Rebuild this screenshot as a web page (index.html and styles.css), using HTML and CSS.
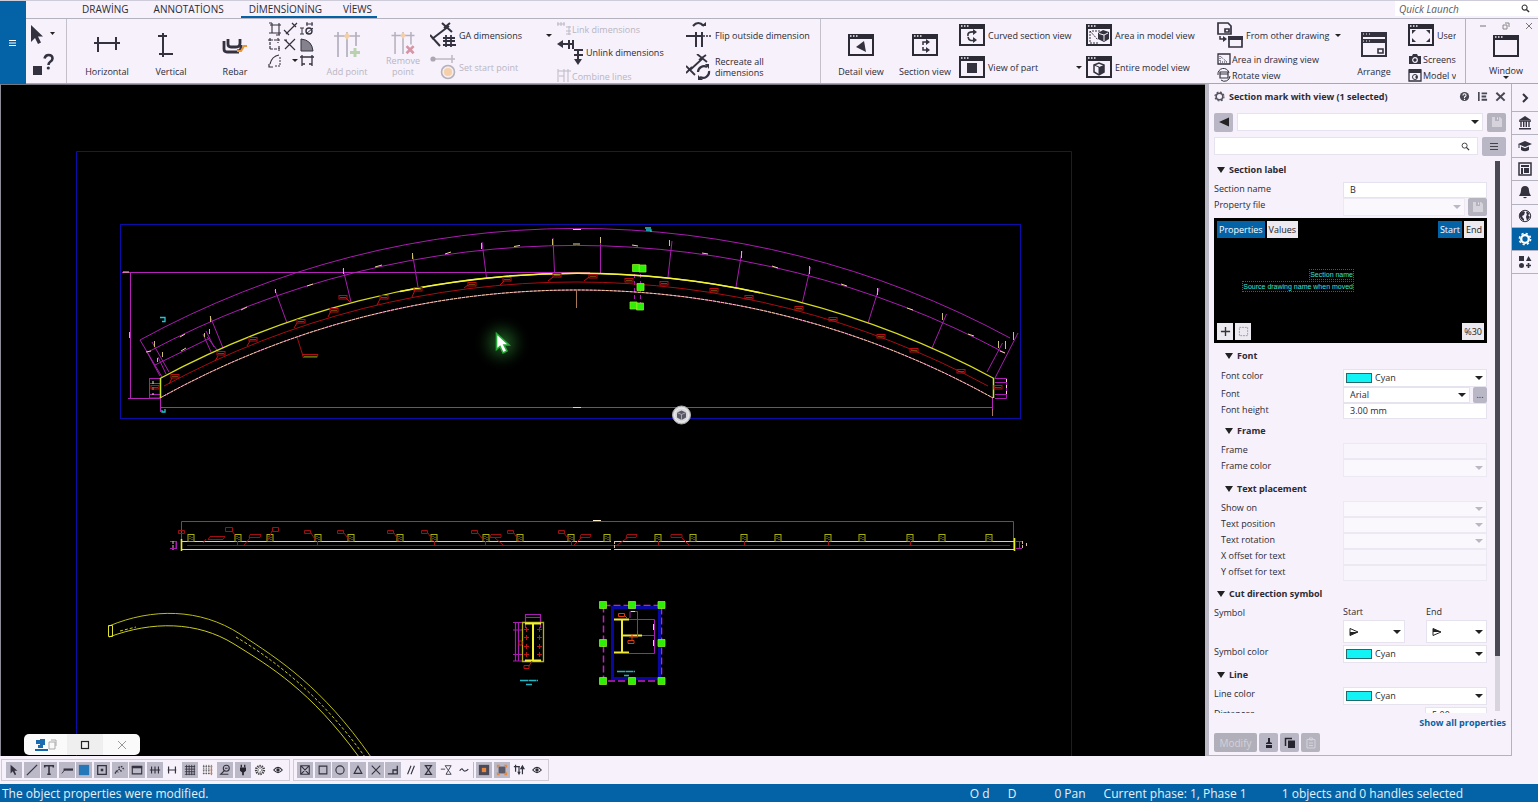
FILE: index.html
```html
<!DOCTYPE html>
<html lang="en">
<head>
<meta charset="utf-8">
<title>Drawing editor</title>
<link rel="stylesheet" href="styles.css">
</head>
<body>
<svg class="defs" aria-hidden="true">
  <symbol id="win" viewBox="0 0 26 22"><rect x="1" y="1" width="24" height="20" fill="none" stroke="currentColor" stroke-width="2"/><path d="M0 0h26v5H0z" fill="currentColor"/><path d="M2 2h1.500M5 2h1.500M8 2h1.500" stroke="#f6f1fb" stroke-width="1.300"/></symbol>
  <symbol id="save" viewBox="0 0 12 12"><path d="M1 1h8l2 2v8H1z" fill="#d6d3dc"/><path d="M4 1h4v4H4z" fill="#b4b2bf"/><path d="M6 1.500h1v2H6z" fill="#e9e6ef"/></symbol>
  <symbol id="eye" viewBox="0 0 14 14"><path d="M2 7q5-6 10 0q-5 6-10 0z" fill="none" stroke="currentColor" stroke-width="1.300"/><circle cx="7" cy="7" r="2" fill="currentColor"/></symbol>
  <symbol id="tag" viewBox="-5 -3 10 6" overflow="visible"><rect x="-4" y="-1.500" width="8" height="3.500" fill="none" stroke="#b80e12"/><path d="M-3 .5h6" stroke="#7c5a14" stroke-width=".8"/></symbol>
  <symbol id="plate" viewBox="-4 -4 8 8" overflow="visible"><rect x="-3" y="-3.500" width="6" height="7" fill="none" stroke="#a8b010"/><path d="M-1 -2v4M1 -1v4" stroke="#8a9a10" stroke-dasharray="1 1"/></symbol>
</svg>
<div class="app">
  <header class="top">
    <button class="menu" aria-label="Menu"><svg viewBox="0 0 8 8"><path d="M0 1.500h7M0 4h7M0 6.500h7" stroke="#fff"/></svg></button>
    <nav class="tabs">
      <a href="#drawing">DRAWİNG</a><a href="#annotations">ANNOTATİONS</a><span class="tab-on"><a href="#dimensioning">DİMENSİONİNG</a><a href="#views">VİEWS</a></span>
      <label class="launch"><input type="text" placeholder="Quick Launch" aria-label="Quick Launch"><svg viewBox="0 0 10 10"><circle cx="4" cy="4" r="2.800" fill="none" stroke="#333" stroke-width="1.200"/><path d="M6 6l3 3" stroke="#333" stroke-width="1.600"/></svg></label>
    </nav>
    <div class="ribbon">
      <div class="pick">
        <button aria-label="Select"><svg viewBox="0 0 30 22"><path d="M5 1v17l4-4 3 6 3-1.500-3-6h5z" fill="#35323f"/><path d="M24 8h5l-2.500 3z" fill="#222"/></svg></button>
        <button aria-label="Help"><svg viewBox="0 0 30 26"><path d="M7 13h9v9H7z" fill="#35323f"/><path d="M18.500 5.500q1-3.500 4-3.500 4 0 4 3.500 0 2-2.500 3.500-1.500 1-1.500 3" fill="none" stroke="#35323f" stroke-width="2.600"/><circle cx="22.300" cy="15" r="1.600" fill="#35323f"/></svg></button>
      </div>
      <div class="tiles lead">
        <button class="tile"><svg viewBox="0 0 26 26"><path d="M0 11h26M4 5v15M22 5v13" stroke="#35323f" stroke-width="2" fill="none"/></svg><span>Horizontal</span></button>
        <button class="tile"><svg viewBox="0 0 26 26"><path d="M5 1v24M0 4h9M1 22h14" stroke="#35323f" stroke-width="2" fill="none"/></svg><span>Vertical</span></button>
        <button class="tile"><svg viewBox="0 0 26 26"><path d="M2 9v8q0 3 3 3h12M6 7v5q0 3 3 3h5q4 0 4-4V7M19 13v3q0 3-4 3" fill="none" stroke="#35323f" stroke-width="2.800"/><path d="M25 14h-3l-3 5h-4" fill="none" stroke="#ee9430" stroke-width="2"/></svg><span>Rebar</span></button>
      </div>
      <div class="minis">
        <button aria-label="Level"><svg viewBox="0 0 16 16"><path d="M5 2v10M12 2v10M3 4h11M2 12h12M2 2h3M9 14h4M12 9v5" stroke="#35323f" stroke-width="1.100"/></svg></button>
        <button aria-label="Free"><svg viewBox="0 0 16 16"><path d="M3 13L12 4M1 9l5 5M9 2l4 4M12 4l2-2" stroke="#35323f" stroke-width="1.200"/></svg></button>
        <button aria-label="Diameter"><svg viewBox="0 0 16 16"><path d="M3 7v6M1 7h4M1 13h4M7 3h7M8 1v4M13 1v4" stroke="#35323f"/><circle cx="10" cy="10" r="3" fill="none" stroke="#35323f" stroke-width="1.400"/><path d="M7 13l7-6" stroke="#35323f"/></svg></button>
        <button aria-label="Orthogonal"><svg viewBox="0 0 16 16"><path d="M3 1v12M3 3h10M1 3h3M11 1v5M3 12h10M12 9v5" stroke="#35323f" stroke-dasharray="3 1" stroke-width="1.200"/></svg></button>
        <button aria-label="Cross"><svg viewBox="0 0 16 16"><path d="M2 3l10 10M12 2L2 12M1 3h3" stroke="#35323f" stroke-width="1.200"/></svg></button>
        <button aria-label="Angle"><svg viewBox="0 0 16 16"><path d="M2 2q11 1 12 12H2z" fill="#85828e" stroke="#35323f"/></svg></button>
        <button aria-label="Curve"><svg viewBox="0 0 16 16"><path d="M3 11Q5 3 12 2M2 11v3h4" fill="none" stroke="#35323f" stroke-width="1.200"/><path d="M13 4v9H7" fill="none" stroke="#35323f" stroke-dasharray="2 1"/></svg></button>
        <button aria-label="More"><svg viewBox="0 0 16 16"><path d="M9 6h6l-3 3z" fill="#222"/></svg></button>
        <button aria-label="Span"><svg viewBox="0 0 16 16"><path d="M3 2v11M13 2v11M1 4h14M3 11h3M10 11h3" stroke="#35323f" stroke-width="1.300"/></svg></button>
      </div>
      <div class="tiles">
        <button class="tile" disabled><svg viewBox="0 0 26 26"><path d="M4 0v25M13 0v25M22 0v14M0 4h26" stroke="#b4b0bd" stroke-width="1.700"/><path d="M13 0l3 4-3 4-3-4z" fill="#f3cfa6"/><path d="M21 16v9M16 20.500h10" stroke="#b9d2ae" stroke-width="3"/></svg><span>Add point</span></button>
        <button class="tile slim" disabled><svg viewBox="0 0 26 26"><path d="M4 0v25M13 0v25M22 0v14M0 4h26" stroke="#b4b0bd" stroke-width="1.700"/><path d="M13 0l3 4-3 4-3-4z" fill="#f3cfa6"/><path d="M17 16l8 8M25 16l-8 8" stroke="#d695a4" stroke-width="3"/></svg><span>Remove point</span></button>
      </div>
      <div class="stack ga">
        <button class="tool"><svg viewBox="0 0 26 26"><path d="M2 17L19 4M0 13l10 11M12 1l10 9M14 6l6-5" stroke="#35323f" stroke-width="2"/><path d="M13 16h12M13 23h13M16 13v12M21 13v12M13 19h12" stroke="#35323f" stroke-width="1.800"/></svg><span>GA dimensions</span><i class="caret"></i></button>
        <button class="tool" disabled><svg viewBox="0 0 26 26"><path d="M3 5h22M22 1v8" stroke="#bdb9c5" stroke-width="1.500"/><circle cx="3" cy="5" r="2.600" fill="#aaa6b2"/><circle cx="18" cy="18" r="6.500" fill="#f6ede9" stroke="#b4b0bd" stroke-width="1.600"/><circle cx="18" cy="18" r="4" fill="#f5cfa9"/></svg><span>Set start point</span></button>
      </div>
      <div class="stack three link">
        <button class="tool mini" disabled><svg viewBox="0 0 14 14"><path d="M0 2h8M1 0v4M4 0v4M7 0v4M12 4v9M9 5h5M9 9h5M9 12h5" stroke="#bdb9c5"/></svg><span>Link dimensions</span></button>
        <button class="tool"><svg viewBox="0 0 26 26"><path d="M2 5h14M12 1v9M16 1v9M21 11v12M17 11h9M17 16h9" stroke="#35323f" stroke-width="2"/><path d="M0 5l6-4v8zM17 20h8l-4 6z" fill="#35323f"/></svg><span>Unlink dimensions</span></button>
        <button class="tool mini" disabled><svg viewBox="0 0 14 14"><path d="M1 0v13M7 0v13M11 0v13M1 2h13M2 7h5" stroke="#bdb9c5"/></svg><span>Combine lines</span></button>
      </div>
      <div class="stack flip">
        <button class="tool"><svg viewBox="0 0 26 26"><path d="M7 4q5-6 11 0" fill="none" stroke="#35323f" stroke-width="2"/><path d="M15 4h5V0z" fill="#35323f"/><path d="M0 14h17M10 10v15M16 10v15" stroke="#35323f" stroke-width="2"/><path d="M17 14h9" stroke="#35323f" stroke-width="1.500" stroke-dasharray="2 1"/></svg><span>Flip outside dimension</span></button>
        <button class="tool"><svg viewBox="0 0 26 26"><path d="M4 16L16 5M0 12l9 9M0 19l6-6M11 0l10 8M13 6l7-5" stroke="#35323f" stroke-width="1.800"/><path d="M12 18a6 6 0 0 1 9-5M23 17a6 6 0 0 1-9 6" fill="none" stroke="#35323f" stroke-width="2.200"/><path d="M19 10h4v5zM12 21v5h5z" fill="#35323f"/></svg><span>Recreate all<br>dimensions</span></button>
      </div>
      <div class="tiles views">
        <button class="tile"><svg viewBox="0 0 26 26"><use href="#win" y="2" width="26" height="22"/><path d="M8 15l8-6 2 11z" fill="#35323f"/></svg><span>Detail view</span></button>
        <button class="tile"><svg viewBox="0 0 26 26"><use href="#win" y="2" width="26" height="22"/><path d="M11 13v-3h5M11 15v3h5" fill="none" stroke="#35323f" stroke-width="1.500"/><path d="M14 7l4 3-4 3zM14 15l4 3-4 3z" fill="#35323f"/></svg><span>Section view</span></button>
      </div>
      <div class="stack curved">
        <button class="tool"><svg viewBox="0 0 26 26"><use href="#win" y="2" width="26" height="22"/><path d="M16 10q-8-1-7 4M9 15q1 5 7 3" fill="none" stroke="#35323f" stroke-width="1.600"/><path d="M14 7l4 3-4 3zM14 15l4 3-4 3z" fill="#35323f"/></svg><span>Curved section view</span></button>
        <button class="tool"><svg viewBox="0 0 26 26"><use href="#win" y="2" width="26" height="22"/><path d="M8 9h10v10H8z" fill="#35323f"/></svg><span>View of part</span><i class="caret"></i></button>
      </div>
      <div class="stack area">
        <button class="tool"><svg viewBox="0 0 26 26"><use href="#win" y="2" width="26" height="22"/><path d="M4 9v12h9M4 9l8 9M6 9h8" stroke="#35323f" fill="none" stroke-dasharray="2 1"/><path d="M12 11l5-3 6 2v7l-5 3-6-3z" fill="#35323f"/><path d="M13 11.500l5 1.500v6M18 13l4-2" stroke="#f6f1fb" fill="none"/></svg><span>Area in model view</span></button>
        <button class="tool"><svg viewBox="0 0 26 26"><use href="#win" y="2" width="26" height="22"/><path d="M8 11l5-2 5 2v7l-5 3-5-3z" fill="none" stroke="#35323f" stroke-width="1.500"/><path d="M13 13l5-2v7l-5 3z" fill="#35323f"/><path d="M8 11l5 2v8" fill="none" stroke="#35323f"/></svg><span>Entire model view</span></button>
      </div>
      <div class="stack three other">
        <button class="tool"><svg viewBox="0 0 26 26"><path d="M1 1h10l3 3v8H1zM8 7h4v3H8z" fill="none" stroke="#35323f" stroke-width="1.700"/><path d="M3 14v3h5" fill="none" stroke="#35323f" stroke-width="1.500"/><path d="M6 14l4 3-4 3z" fill="#35323f"/><path d="M12 15h13v10H12z" fill="none" stroke="#35323f" stroke-width="1.700"/><path d="M11 14h15v4H11z" fill="#35323f"/></svg><span>From other drawing</span><i class="caret"></i></button>
        <button class="tool mini"><svg viewBox="0 0 14 14"><path d="M1 2h12v10H1z" fill="none" stroke="#35323f" stroke-width="1.300"/><path d="M3 4v6h7z" fill="none" stroke="#35323f" stroke-dasharray="1 1"/></svg><span>Area in drawing view</span></button>
        <button class="tool mini"><svg viewBox="0 0 14 14"><path d="M3 4h8v6H3zM3 6h8" fill="none" stroke="#35323f" stroke-width="1.200"/><path d="M1 7a5.500 5.500 0 0 1 11-2M13 8a5.500 5.500 0 0 1-9 4" fill="none" stroke="#35323f"/></svg><span>Rotate view</span></button>
      </div>
      <div class="tiles">
        <button class="tile"><svg viewBox="0 0 26 26"><path d="M1 1h24v23H1z" fill="none" stroke="#35323f" stroke-width="2"/><path d="M0 0h26v5H0zM0 7h26v4H0z" fill="#35323f"/><path d="M2 2h8M2 9h8" stroke="#f6f1fb" stroke-dasharray="1 2"/><path d="M17 17h5v4h-5z" fill="none" stroke="#35323f" stroke-width="1.600"/></svg><span>Arrange</span></button>
      </div>
      <div class="stack three user">
        <button class="tool"><svg viewBox="0 0 26 26"><use href="#win" y="2" width="26" height="22"/><path d="M4 8h4l-4 4zM22 8h-4l4 4zM4 20h4l-4-4zM22 20h-4l4-4z" fill="#35323f"/></svg><span>User</span></button>
        <button class="tool mini"><svg viewBox="0 0 14 14"><path d="M1 4h3l1-2h4l1 2h3v8H1z" fill="#35323f"/><circle cx="7" cy="8" r="2.300" fill="none" stroke="#f6f1fb" stroke-width="1.200"/></svg><span>Screens</span></button>
        <button class="tool mini"><svg viewBox="0 0 14 14"><path d="M1 2h12v11H1z" fill="none" stroke="#35323f" stroke-width="1.300"/><path d="M1 1h12v4H1z" fill="#35323f"/><circle cx="7" cy="9" r="2.500" fill="none" stroke="#35323f"/><path d="M7 9l2-2v4z" fill="#35323f"/></svg><span>Model v</span></button>
      </div>
      <div class="window">
        <div class="controls">
          <button aria-label="Minimize"><svg viewBox="0 0 8 8"><path d="M1 4h6" stroke="#777"/></svg></button>
          <button aria-label="Restore"><svg viewBox="0 0 8 8"><path d="M1 3h4v4H1zM3 1h4v4" fill="none" stroke="#888"/></svg></button>
          <button aria-label="Close"><svg viewBox="0 0 8 8"><path d="M1 1l6 6M7 1L1 7" stroke="#777"/></svg></button>
        </div>
        <button class="wtile"><svg viewBox="0 0 26 22"><use href="#win" width="26" height="22"/></svg><span>Window</span><i class="caret"></i></button>
      </div>
    </div>
  </header>

  <main class="canvas">
    <svg class="sheet" viewBox="1 85 1204 671" preserveAspectRatio="xMinYMin meet" fill="none" role="img" aria-label="Drawing sheet">
      <defs><radialGradient id="glow"><stop offset="0" stop-color="#235c25"/><stop offset=".45" stop-color="#0e2c10" stop-opacity=".8"/><stop offset="1" stop-color="#000" stop-opacity="0"/></radialGradient></defs>
      <g stroke="#0c0ca8"><path d="M76.500 770V151.500H1071.500V770"/><rect x="120.500" y="224.500" width="900" height="194"/></g>
      <g stroke="#a81cb0">
        <path d="M140 340A911 911 0 0 1 1010 338M148 352A911 911 0 0 1 1005 353M155 365L210 338"/>
        <path d="M122 272.500H590M130.500 272V398M128 398.500H160M160 407.500H993M160.500 398V412M992.500 398V416" stroke="#b422b8"/>
        <path d="M210 316L223 348M275 290L287 323M343 269L351 302M412.500 254L418 287M482 242L486.500 278M553 238L554.500 272M600.500 237V273M672 241L668 277M742 251L736 287M810.500 267L802.500 302M879 288L868 323M946.500 314L932 348M1002.500 343L987 372M1018 333L995 378"/>
        <path d="M140 340L162 377M152 342L169 372M147 352L160 376M158 357L166 374M203 334L211 352M207 337L217 350M206 331L214 347"/>
        <path d="M149.500 378V398H160M149.500 378.500H160M149 383.500H160M149 394.500H160M995 378.500H1006.500V398.500H995M995 382.500H1007M995 394.500H1007"/>
        <path d="M634.500 274V303M640.500 274V303" stroke-dasharray="4 3"/>
      </g>
      <path d="M164 386A868 868 0 0 1 988 386M297 337L303 356" stroke="#a80c10"/>
      <path d="M160 378.500A880 880 0 0 1 994 378.500" stroke="#d8dc20" stroke-width="1.300"/>
      <path d="M400 291.500A880 880 0 0 1 760 292.700" stroke="#f4f43c" stroke-width="1.500"/>
      <path d="M160 398A857 857 0 0 1 993 398" stroke="#b83a90"/>
      <path d="M160 398A857 857 0 0 1 993 398" stroke="#f4d8a0" stroke-dasharray="3 1"/>
      <path d="M160.500 378V398M993.500 378V398" stroke="#c8e820" stroke-width="1.500"/>
      <path d="M153 381v14M1006.500 379v18" stroke="#eee0b0" stroke-dasharray="3 3"/>
      <g stroke="#e8d890">
        <path d="M180 337l5-3M241 310l6-3M307 286l6-2M375 267l7-2M445 254l6-2M514 246.500l6-1M573 244h7M573 229.500h8M573 407.500h8M632 245l6 1M702 253l6 1M772 266l6 2M841 284l6 2M907 308l6 2M968 334l6 2M181 351l5-3M123 272h6M146 352l5-1M1000 351l5 2"/>
        <path d="M210.500 316v6M275.500 289v4M343.500 268v6M412.500 253v6M481.500 243v6M552.500 239v6M600.500 237v6M669.500 240v6M741.500 251v7M809.500 266v8M877.500 288v7M942.500 313v7M998.500 341v7M1005.500 341v8M1013.500 332v8M154.500 341v6M162.500 352v5M157.500 358v4M204.500 333v4M209.500 329v5M129.500 332v6" stroke="#cfc070"/>
        <path d="M576.500 290V308M992.500 409v7" stroke="#a87858"/>
      </g>
      <g>
        <use href="#tag" x="170" y="373" width="10" height="6"/><use href="#tag" x="216" y="350" width="10" height="6"/><use href="#tag" x="248" y="336" width="10" height="6"/><use href="#tag" x="296" y="318" width="10" height="6"/><use href="#tag" x="329" y="307" width="10" height="6"/><use href="#tag" x="379" y="294" width="10" height="6"/><use href="#tag" x="338" y="294" width="10" height="6"/><use href="#tag" x="413" y="286" width="10" height="6"/><use href="#tag" x="467" y="281" width="10" height="6"/><use href="#tag" x="502" y="276" width="10" height="6"/><use href="#tag" x="552" y="272" width="10" height="6"/><use href="#tag" x="588" y="273" width="10" height="6"/><use href="#tag" x="624" y="277" width="10" height="6"/><use href="#tag" x="659" y="280" width="10" height="6"/><use href="#tag" x="709" y="287" width="10" height="6"/><use href="#tag" x="744" y="294" width="10" height="6"/><use href="#tag" x="794" y="305" width="10" height="6"/><use href="#tag" x="828" y="316" width="10" height="6"/><use href="#tag" x="876" y="333" width="10" height="6"/><use href="#tag" x="909" y="347" width="10" height="6"/><use href="#tag" x="956" y="368" width="10" height="6"/><use href="#tag" x="993" y="384" width="10" height="6"/><use href="#tag" x="150" y="384" width="10" height="6"/>
        <path d="M172 378l-3 6M218 356l-3 5M250 341l-3 5M297 323l-3 5M331 311l-3 6M380 299l-3 6M415 290l-3 7M468 285l-4 3M504 281l-4 4M553 277l-5 4M589 277l-5 4M345 297l5 5" stroke="#c01014"/>
        <path d="M303 354.500h15l-1 3h-14z" stroke="#b01010"/><path d="M304 356.500h13" stroke="#5c6a10"/>
      </g>
      <path d="M160 317.500h5v4h-3M162 410v2h3v-3M645 228h6M646 230h5v2" stroke="#22c8d4" stroke-width="1.300"/>
      <g fill="#2cf008" stroke="#8ce820" stroke-width=".8"><path d="M632.500 264.500h7v7h-7zM639 265h7v7h-7zM637 283.500h7v7h-7zM630 302h7v7h-7zM636.500 303h7v7h-7z"/></g>

      <g stroke="#a81cb0"><path d="M181.500 549V521.500H1013.500V549M170 541.500h6v7h-6M176.500 541v8M1016 541.500h6M1016 548.500h6M1019.500 541v8"/></g>
      <path d="M187 545.500H1010" stroke="#a01010"/>
      <path d="M181 541.500H611M614 541.500H1014M181 549.500H611M614 549.500H1014" stroke="#e0d878"/>
      <path d="M181.500 539v12M1014.500 538v13" stroke="#e8f020" stroke-width="1.600"/>
      <path d="M1022.500 541v8M1026.500 543v4M173 541v9M614.500 541v9" stroke="#e0b8a0" stroke-dasharray="3 1"/>
      <path d="M593 520.500h8" stroke="#fff0d0"/>
      <g><use href="#plate" x="187" y="534" width="8" height="8"/><use href="#plate" x="234" y="534" width="8" height="8"/><use href="#plate" x="266" y="534" width="8" height="8"/><use href="#plate" x="314" y="534" width="8" height="8"/><use href="#plate" x="347" y="534" width="8" height="8"/><use href="#plate" x="396" y="534" width="8" height="8"/><use href="#plate" x="430" y="534" width="8" height="8"/><use href="#plate" x="482" y="534" width="8" height="8"/><use href="#plate" x="516" y="534" width="8" height="8"/><use href="#plate" x="567" y="534" width="8" height="8"/><use href="#plate" x="603" y="534" width="8" height="8"/><use href="#plate" x="654" y="534" width="8" height="8"/><use href="#plate" x="689" y="534" width="8" height="8"/><use href="#plate" x="740" y="534" width="8" height="8"/><use href="#plate" x="774" y="534" width="8" height="8"/><use href="#plate" x="824" y="534" width="8" height="8"/><use href="#plate" x="858" y="534" width="8" height="8"/><use href="#plate" x="906" y="534" width="8" height="8"/><use href="#plate" x="938" y="534" width="8" height="8"/><use href="#plate" x="985" y="534" width="8" height="8"/></g>
      <g stroke="#a00e10"><path d="M178.500 530.500h6v3h-6zM225.500 527.500h7v4h-7zM272.500 527.500h6v4h-6zM304.500 530.500h6v3h-6zM337.500 530.500h6v3h-6zM387.500 530.500h6v3h-6zM421.500 530.500h6v3h-6zM471.500 530.500h6v3h-6zM507.500 530.500h6v3h-6zM558.500 530.500h6v3h-6zM210 536.500h15l-2 3h-15zM250 534.500h11l-1 3h-11zM491 534.500h10v3h-11zM581 534.500h10l-1 3h-10zM627 534.500h10l-1 3h-10zM671 534.500h11v3h-11z"/><path d="M232 531l3 4M272 531l-4 9M311 533l5 8M344 533l6 8M394 533l5 8M428 533l5 8M478 533l6 8M514 533l5 8M564 533l6 8M250 538l-6 7M495 538l8 7M581 538l-7 7M627 538l-11 8M682 538l7 7M206 539l-3 4M237.500 541v4M317.500 541v4M434.500 541v4M485.500 541v4M571.500 541v4M658.500 541v4M744.500 541v4M828.500 541v4M910.500 541v4"/></g>

      <path d="M109 626C152 608 200 608 240 634S322 687 371 757" stroke="#b8bc18"/>
      <path d="M109 637C152 621 197 621 234 644S310 690 359 757" stroke="#c8cc20"/>
      <path d="M236 637C276 661 322 697 365 757M120 631l16-4" stroke="#c8cc20" stroke-dasharray="3 2"/>
      <path d="M108.500 625.500h4v11h-4z" stroke="#e0e430"/>

      <g stroke="#a81cb0"><path d="M525.500 628V614.500H540.500V628M525 617.500h16M515.500 622V661M513 622.500h14M513 630h9M513 654.500h9M513 661h14M518.500 622V661" stroke-width="1.200"/></g>
      <path d="M522.500 622.500H543.500V661.500H522.500z" stroke="#b4b418" stroke-width="1.300"/><path d="M533 623V661M525 623.500h16M525 660.500h16" stroke="#f0f030" stroke-width="2"/>
      <path d="M524 629.500h5M526.500 627v5M524 637.500h5M526.500 635v5M524 646.500h5M526.500 644v5M524 654.500h5M526.500 652v5M537 629.500h5M539.500 627v5M537 637.500h5M539.500 635v5M537 646.500h5M539.500 644v5M537 654.500h5M539.500 652v5M524 665.500h5v3h-5zM529 666l3-5M519 641h3v4h-3z" stroke="#c01414"/>
      <path d="M520 680.500h18M526 684.500h6M617 671.500h18M624 675.500h5" stroke="#20b8c4" stroke-width="1.500" stroke-dasharray="8 .5"/>

      <rect x="603.500" y="605.500" width="58" height="75.500" stroke="#c020c8" stroke-width="1.500" stroke-dasharray="7 3"/>
      <rect x="612.500" y="607.500" width="47" height="71" stroke="#0808a0" stroke-width="3"/>
      <path d="M629 619.500H654.500V653.500H629M637.500 635V611.500H630V618M642 635.500h12" stroke="#a81cb0"/>
      <path d="M614 619.500h15M614 652.500h15M622 619V652M622 635.500H642" stroke="#f0e838" stroke-width="2"/>
      <path d="M618.500 613.500h6v3h-6zM625 616l3 3M628 640.500h6v3h-6zM629 637h9M632 634v6M637.500 631v6" stroke="#d83c10"/>
      <path d="M653.500 624v6M653.500 640v6M631 611.500h4" stroke="#e8d8b0"/>
      <path fill="#2cf008" stroke="#8ce820" stroke-width=".8" d="M599.500 601.500h7v7h-7zM628.500 601.500h7v7h-7zM658 601.500h7v7h-7zM599.500 639.500h7v7h-7zM658 639.500h7v7h-7zM599.500 677.500h7v7h-7zM628.500 677.500h7v7h-7zM658 677.500h7v7h-7z"/>

      <circle cx="681.500" cy="415" r="9" fill="#d8d8dc" stroke="#aaaab0"/><circle cx="681.500" cy="415" r="7" stroke="#eee"/><path d="M677 412.500l4.500-2 4.500 2v5l-4.500 2.500-4.500-2.500z" fill="#585864"/><path d="M677 412.500l4.500 2 4.500-2M681.500 414.500v5.500" stroke="#b8b8c4" stroke-width=".8"/>
      <circle cx="502" cy="343" r="29" fill="url(#glow)"/>
      <path d="M496.500 333.500v16l3.500-3 3 6.500 4-2-3-6h5z" fill="#fff" stroke="#28a838" stroke-width="1.600"/>
    </svg>
    <div class="float">
      <button aria-label="Sheets"><svg viewBox="0 0 24 14"><path d="M2 2h4v4H2zM6 1h5v6H6z" fill="#1b6bb0"/><path d="M1 12h13" stroke="#1466ac" stroke-width="2"/><path d="M4 7h5v3H4z" fill="#1b6bb0"/><path d="M15 4h6v7h-6zM17 2h5v6" fill="none" stroke="#aaa"/></svg></button>
      <button class="mid" aria-label="Restore"><svg viewBox="0 0 14 14"><rect x="3.500" y="3.500" width="7" height="7" fill="none" stroke="#222" stroke-width="1.200"/></svg></button>
      <button aria-label="Close"><svg viewBox="0 0 14 14"><path d="M3 3l8 8M11 3l-8 8" stroke="#999"/></svg></button>
    </div>
  </main>

  <aside class="panel">
    <div class="title"><svg viewBox="0 0 12 12"><circle cx="6" cy="6" r="3.600" fill="none" stroke="#555360" stroke-width="1.700"/><circle cx="6" cy="6" r="4.900" fill="none" stroke="#555360" stroke-width="1.300" stroke-dasharray="2 1.850"/></svg><h2>Section mark with view (1 selected)</h2>
      <button aria-label="Help"><svg viewBox="0 0 12 12"><circle cx="6" cy="6" r="5" fill="#4a4854"/><path d="M4.300 4.800q0-1.800 1.700-1.800t1.700 1.600q0 1-1.700 2V7.500M6 8.500v1.200" stroke="#fff" stroke-width="1.200" fill="none"/></svg></button>
      <button aria-label="Layout"><svg viewBox="0 0 12 12"><path d="M2 1v10" stroke="#4a4854" stroke-width="1.800"/><path d="M5 2.500h6M5 6h5M5 9.500h6" stroke="#4a4854" stroke-width="2"/></svg></button>
      <button aria-label="Close panel"><svg viewBox="0 0 12 12"><path d="M1.500 2l9 8.500M10.500 2l-9 8.500" stroke="#4a4854" stroke-width="2.200"/></svg></button></div>
    <div class="bar"><button class="gbtn" aria-label="Back"><svg viewBox="0 0 12 12"><path d="M11 1.500v9L1 6z" fill="#222"/></svg></button>
      <span class="combo grow"><select aria-label="Saved properties"><option></option></select></span>
      <button class="gbtn off" disabled aria-label="Save"><svg viewBox="0 0 12 12"><use href="#save" width="12" height="12"/></svg></button></div>
    <div class="bar"><label class="find"><input type="text" aria-label="Search properties"><svg viewBox="0 0 10 10"><circle cx="4" cy="4" r="2.800" fill="none" stroke="#333"/><path d="M6 6l3 3" stroke="#333" stroke-width="1.400"/></svg></label>
      <button class="gbtn wide" aria-label="List"><svg viewBox="0 0 12 12"><path d="M2 3.500h8M2 6.500h8M2 9.500h8" stroke="#444"/></svg></button></div>
    <div class="scroller">
      <form class="props">
        <h3>Section label</h3>
        <div class="row"><label for="sn">Section name</label><input id="sn" type="text" value="B"></div>
        <div class="row tall"><label for="pf">Property file</label><div class="pair"><span class="combo dim"><select id="pf" disabled><option></option></select></span><button type="button" class="gbtn off" disabled aria-label="Save file"><svg viewBox="0 0 12 12"><use href="#save" width="12" height="12"/></svg></button></div></div>
        <div class="preview">
          <div class="ends"><div><button type="button" class="on">Properties</button><button type="button">Values</button></div><div><button type="button" class="on">Start</button><button type="button">End</button></div></div>
          <div class="marks"><span>Section name</span><span>Source drawing name when moved</span></div>
          <div class="ends"><div><button type="button" class="sq" aria-label="Add"><svg viewBox="0 0 12 12"><path d="M6 1v10M1 6h10" stroke="#333" stroke-width="1.500"/></svg></button><button type="button" class="sq" aria-label="Area"><svg viewBox="0 0 12 12"><rect x="1.500" y="1.500" width="9" height="9" fill="none" stroke="#999" stroke-dasharray="2 1"/></svg></button></div><button type="button">%30</button></div>
        </div>
        <h3 class="sub big">Font</h3>
        <div class="row tall sub"><label for="fc">Font color</label><span class="combo sw"><select id="fc"><option>Cyan</option></select></span></div>
        <div class="row sub"><label for="fn">Font</label><div class="pair"><span class="combo"><select id="fn"><option>Arial</option></select></span><button type="button" class="gbtn dots">...</button></div></div>
        <div class="row sub"><label for="fh">Font height</label><input id="fh" type="text" value="3.00 mm"></div>
        <h3 class="sub">Frame</h3>
        <div class="row sub"><label for="fr">Frame</label><input id="fr" type="text" disabled></div>
        <div class="row tall sub"><label for="frc">Frame color</label><span class="combo dim"><select id="frc" disabled><option></option></select></span></div>
        <h3 class="sub">Text placement</h3>
        <div class="row sub"><label for="so">Show on</label><span class="combo dim"><select id="so" disabled><option></option></select></span></div>
        <div class="row sub"><label for="tp">Text position</label><span class="combo dim"><select id="tp" disabled><option></option></select></span></div>
        <div class="row sub"><label for="tr">Text rotation</label><span class="combo dim"><select id="tr" disabled><option></option></select></span></div>
        <div class="row sub"><label for="xo">X offset for text</label><input id="xo" type="text" disabled></div>
        <div class="row sub"><label for="yo">Y offset for text</label><input id="yo" type="text" disabled></div>
        <h3 class="big">Cut direction symbol</h3>
        <div class="row sym"><span class="lbl">Symbol</span><div class="two">
          <div><label for="ss">Start</label><span class="combo flag"><select id="ss"><option></option></select><svg viewBox="0 0 10 10"><path d="M1 1.500l8 3.500-8 3.500z" fill="none" stroke="#222"/><path d="M1 5h8L1 8.500z" fill="#222"/></svg></span></div>
          <div><label for="se">End</label><span class="combo flag"><select id="se"><option></option></select><svg viewBox="0 0 10 10"><path d="M1 1.500l8 3.500-8 3.500z" fill="none" stroke="#222"/><path d="M1 1.500L9 5H1z" fill="#222"/></svg></span></div></div></div>
        <div class="row tall"><label for="sc">Symbol color</label><span class="combo sw"><select id="sc"><option>Cyan</option></select></span></div>
        <h3>Line</h3>
        <div class="row tall"><label for="lc">Line color</label><span class="combo sw"><select id="lc"><option>Cyan</option></select></span></div>
        <div class="row dist"><label for="di">Distances</label><input id="di" type="text" value="5.00 mm"></div>
      </form>
      <div class="track"><div class="thumb"></div></div>
    </div>
    <a class="showall" href="#all">Show all properties</a>
    <div class="actions"><button class="modify" disabled>Modify</button>
      <button class="gbtn" aria-label="Brush"><svg viewBox="0 0 12 12"><path d="M5 1h2v4l2 1v5H3V6l2-1z" fill="#26242e"/><path d="M3 7.500h6" stroke="#b8b6c4"/></svg></button>
      <button class="gbtn" aria-label="Copy"><svg viewBox="0 0 12 12"><path d="M1.500 9V1.500H8" fill="none" stroke="#26242e" stroke-width="1.500"/><path d="M4 3.500h7V11H4z" fill="#26242e"/></svg></button>
      <button class="gbtn off" disabled aria-label="Paste"><svg viewBox="0 0 12 12"><path d="M2 2.500h8V11H2zM4.500 1h3v2h-3zM4 6h4M4 8.500h4" fill="none" stroke="#d4d2da"/></svg></button></div>
  </aside>

  <nav class="side">
    <button class="chev" aria-label="Collapse"><svg viewBox="0 0 14 14"><path d="M5 3l4 4-4 4" fill="none" stroke="#35323f" stroke-width="2"/></svg></button>
    <div class="strip">
      <button aria-label="Catalog"><svg viewBox="0 0 14 14"><path d="M7 0l6 4H1zM1 12h12v1.500H1z" fill="#35323f"/><path d="M3 5v6M5.700 5v6M8.300 5v6M11 5v6M1 5h12" stroke="#35323f" stroke-width="1.400"/></svg></button>
      <button aria-label="Learning"><svg viewBox="0 0 14 14"><path d="M0 5l7-3 7 3-7 3zM3 7.500l4 1.700 4-1.700V11q-4 2.500-8 0z" fill="#35323f"/><path d="M1 5v4" stroke="#35323f"/></svg></button>
      <button aria-label="Layouts"><svg viewBox="0 0 14 14"><path d="M1 1h12v12H1z" fill="none" stroke="#35323f" stroke-width="1.500"/><path d="M3 3h8v2H3zM3 6h2v6H3zM6 6h5v5H6z" fill="#35323f"/></svg></button>
      <button aria-label="Notifications"><svg viewBox="0 0 14 14"><path d="M7 1q4 0 4 4.500 0 3 2 5.500H1q2-2.500 2-5.500Q3 1 7 1zM5 12h4q-2 2.500-4 0z" fill="#35323f"/></svg></button>
      <button aria-label="Online"><svg viewBox="0 0 14 14"><circle cx="7" cy="7" r="5.700" fill="none" stroke="#35323f"/><path d="M2 4l3-2 2 1-1 3-2 1 1 2 1 1v2Q1 10 2 4zM9 2l3 3-2 1 2 2-3 4-1-4 1-3-1-1z" fill="#35323f"/></svg></button>
      <button class="on" aria-label="Properties"><svg viewBox="0 0 14 14"><circle cx="7" cy="7" r="3.800" fill="none" stroke="#fff" stroke-width="2.300"/><circle cx="7" cy="7" r="5.600" fill="none" stroke="#fff" stroke-width="1.500" stroke-dasharray="2.200 2.200"/></svg></button>
      <button aria-label="Components"><svg viewBox="0 0 14 14"><path d="M1 1h5v5H1zM10.500 1l3 5H8z" fill="#35323f"/><circle cx="3.500" cy="10.500" r="2.500" fill="#35323f"/><path d="M10.500 8v5M8 10.500h5" stroke="#35323f" stroke-width="1.700"/></svg></button>
    </div>
  </nav>

  <div class="snaps">
    <div class="snapset first">
      <button class="g" aria-label="Select all"><svg viewBox="0 0 14 14"><path d="M3 1v10l2.500-2.500L8 13l1.500-1-2-4H11z" fill="#35323f"/></svg></button>
      <button class="g" aria-label="Lines"><svg viewBox="0 0 14 14"><path d="M1 13L13 1" stroke="#35323f" stroke-width="1.400"/></svg></button>
      <button class="g" aria-label="Texts"><svg viewBox="0 0 14 14"><path d="M2 4V2h10v2M7 2v10M5 12h4" fill="none" stroke="#35323f" stroke-width="1.800"/></svg></button>
      <button class="g" aria-label="Marks"><svg viewBox="0 0 14 14"><path d="M1 11l4-5" stroke="#35323f"/><path d="M3 6.500h11" stroke="#35323f" stroke-width="2.600"/></svg></button>
      <button class="g" aria-label="Parts"><svg viewBox="0 0 14 14"><path d="M1 1h12v12H1z" fill="#2478b8"/></svg></button>
      <button class="g" aria-label="Bolts"><svg viewBox="0 0 14 14"><path d="M2 2h10v10H2z" fill="none" stroke="#35323f" stroke-width="1.500"/><path d="M5.500 5.500h3v3h-3z" fill="#35323f"/></svg></button>
      <button class="g" aria-label="Welds"><svg viewBox="0 0 14 14"><path d="M1 11l5-5 3 3M5 4l4-1 3 4M2 8l3 2" fill="none" stroke="#35323f" stroke-dasharray="2 1" stroke-width="1.500"/></svg></button>
      <button class="g" aria-label="Views"><svg viewBox="0 0 14 14"><path d="M1.500 3h11v8.500h-11z" fill="none" stroke="#35323f" stroke-width="1.300"/><path d="M1 2h12v3H1z" fill="#35323f"/></svg></button>
      <button class="g" aria-label="Dimensions"><svg viewBox="0 0 14 14"><path d="M1 7h12M3 3v8M7 3v8M11 3v8" stroke="#35323f" stroke-width="1.300"/></svg></button>
      <button aria-label="Single dimension"><svg viewBox="0 0 14 14"><path d="M2 7h10M3 3v8M11 3v8" stroke="#35323f" stroke-width="1.400"/></svg></button>
      <button class="g" aria-label="Grids"><svg viewBox="0 0 14 14"><path d="M3 1v12M6 1v12M9 1v12M12 1v12M1 3h12M1 6h12M1 9h12M1 12h12" stroke="#35323f"/></svg></button>
      <button aria-label="Grid line"><svg viewBox="0 0 14 14"><path d="M2 1v12M5 1v12M8 1v12M1 3h12M1 7h12M1 11h12" stroke="#555" stroke-dasharray="2 1"/><path d="M11 1v12" stroke="#d87a48" stroke-width="1.500"/></svg></button>
      <button class="g" aria-label="Detail marks"><svg viewBox="0 0 14 14"><circle cx="8.500" cy="5" r="3.500" fill="none" stroke="#35323f" stroke-width="1.300"/><path d="M6 8l-4 4h9M7 5h3" stroke="#35323f" fill="none" stroke-width="1.300"/></svg></button>
      <button class="g" aria-label="Plugins"><svg viewBox="0 0 14 14"><path d="M5 1v3M9 1v3" stroke="#26242e" stroke-width="1.500"/><path d="M3.500 4h7v4L8 10v3H6v-3L3.500 8z" fill="#26242e"/></svg></button>
      <button aria-label="Hatch"><svg viewBox="0 0 14 14"><circle cx="7" cy="7" r="4.500" fill="none" stroke="#444" stroke-width="3" stroke-dasharray="1.500 1"/><circle cx="7" cy="7" r="2" fill="none" stroke="#444" stroke-dasharray="1 1"/></svg></button>
      <button aria-label="Selection visibility"><svg viewBox="0 0 14 14"><use href="#eye" width="14" height="14"/></svg></button>
    </div>
    <div class="snapset second">
      <button class="g" aria-label="Snap points"><svg viewBox="0 0 14 14"><path d="M2 2h10v10H2zM2 2l10 10M12 2L2 12" fill="none" stroke="#35323f" stroke-width="1.300"/></svg></button>
      <button class="g" aria-label="Snap end"><svg viewBox="0 0 14 14"><path d="M2.500 2.500h9v9h-9z" fill="none" stroke="#35323f" stroke-width="1.300"/></svg></button>
      <button class="g" aria-label="Snap center"><svg viewBox="0 0 14 14"><circle cx="7" cy="7" r="4.800" fill="none" stroke="#35323f" stroke-width="1.300"/></svg></button>
      <button class="g" aria-label="Snap mid"><svg viewBox="0 0 14 14"><path d="M7 2.500l4.500 8.500h-9z" fill="none" stroke="#35323f" stroke-width="1.300"/></svg></button>
      <button class="g" aria-label="Snap intersection"><svg viewBox="0 0 14 14"><path d="M2 2l10 10M12 2L2 12" stroke="#35323f" stroke-width="1.300"/></svg></button>
      <button class="g" aria-label="Snap perpendicular"><svg viewBox="0 0 14 14"><path d="M1 11.500h11V2M7 11V7h5" fill="none" stroke="#35323f" stroke-width="1.500"/></svg></button>
      <button aria-label="Snap parallel"><svg viewBox="0 0 14 14"><path d="M3 12L7 2M7 12l4-10" stroke="#35323f" stroke-width="1.300"/></svg></button>
      <button class="g" aria-label="Snap nearest"><svg viewBox="0 0 14 14"><path d="M3 2h8L4 12h7L4 2" fill="none" stroke="#35323f" stroke-width="1.400"/></svg></button>
      <button aria-label="Snap extension"><svg viewBox="0 0 14 14"><path d="M6 2h7L7 12h6L6 2M1 6h5" fill="none" stroke="#35323f"/></svg></button>
      <button aria-label="Snap free"><svg viewBox="0 0 14 14"><path d="M2 8q2-4 4-1t6-1" fill="none" stroke="#35323f" stroke-width="1.300"/></svg></button>
      <i></i>
      <button class="g" aria-label="Snap reference"><svg viewBox="0 0 14 14"><path d="M1 1h12v12H1z" fill="#4c4a58"/><path d="M4.500 4.500h5v5h-5z" fill="#e8873c"/></svg></button>
      <button class="g" aria-label="Snap geometry"><svg viewBox="0 0 14 14"><path d="M3 3h8v8H3z" fill="#5c5a68"/><path d="M1 1h4L1 5zM13 1H9l4 4zM1 13h4L1 9zM13 13H9l4-4z" fill="#e8873c"/></svg></button>
      <button aria-label="Snap dimension"><svg viewBox="0 0 14 14"><path d="M1 3h7M3 1v8M7 3v8M11 3v9" fill="none" stroke="#35323f" stroke-width="1.400"/><path d="M8 6l3-5 3 5zM5 9h4l-2 4z" fill="#35323f"/></svg></button>
      <button aria-label="Snap visibility"><svg viewBox="0 0 14 14"><use href="#eye" width="14" height="14"/></svg></button>
    </div>
  </div>

  <footer class="status"><span class="msg">The object properties were modified.</span><span>O d</span><span>D</span><span class="pan">0 Pan</span><span>Current phase: 1, Phase 1</span><span class="sel">1 objects and 0 handles selected</span></footer>
</div>
</body>
</html>
```
FILE: styles.css
```css
* { box-sizing: border-box; }
html, body { height: 100%; }
body { margin: 0; font: 9px/12px "Open Sans", "Noto Sans", sans-serif; color: #2c2a34; background: #f6f1fb; overflow: hidden; }
button, input, select { font: inherit; color: inherit; border: 0; margin: 0; padding: 0; background: none; border-radius: 0; }
button { cursor: pointer; }
svg { display: block; }
a { color: inherit; text-decoration: none; }
h2, h3 { margin: 0; font-size: 9px; font-weight: 700; }
.defs { position: absolute; width: 0; height: 0; }

.app { display: grid; height: 100vh; grid-template: auto minmax(0, 1fr) 28px 18px / minmax(0, 1fr) 306px 27px; }
.top { grid-column: 1 / -1; display: grid; grid-template: 18px 65px / 26px minmax(0, 1fr); border-top: 1px solid #cfccda; }
.menu { grid-row: 1 / 3; background: #0462a6; display: grid; place-items: center; }
.menu svg { width: 8px; height: 8px; }

.tabs { display: flex; border-bottom: 1px solid #b5b2bf; font-size: 10px; line-height: 16px; padding-left: 56px; gap: 25px; }
.tab-on { display: flex; gap: 21px; padding: 0 5px 0 8px; margin-left: -8px; border-bottom: 2px solid #0462a6; }
.launch { display: flex; align-items: center; width: 143px; height: 15px; margin-left: auto; background: #fff; padding: 0 8px 0 4px; }
.launch input { flex: 1; min-width: 0; font-style: italic; outline: 0; }
.launch input::placeholder { color: #5c5a66; }
.launch svg { width: 9px; height: 9px; }

.ribbon { display: flex; overflow: hidden; border-bottom: 1px solid #a9a6b2; }
.ribbon > div { flex: none; }
.pick { width: 41px; border-right: 1px solid #c4c1cd; padding-top: 5px; }
.pick button { display: block; }
.pick svg { width: 30px; }
.pick button + button { margin-top: 7px; }
.tiles { display: flex; }
.lead, .views { padding-left: 8px; }
.views { border-left: 1px solid #c4c1cd; }
.tile { width: 64px; display: flex; flex-direction: column; align-items: center; padding: 13px 0 6px; line-height: 11px; }
.tile svg { width: 26px; height: 26px; min-height: 0; flex-shrink: 1; }
.tile span { margin-top: auto; }
.slim { width: 48px; }
button:disabled { color: #b9b5c2; cursor: default; }
.minis { width: 48px; display: grid; grid-template-columns: repeat(3, 16px); grid-auto-rows: 16px; padding-top: 2px; }
.minis svg { width: 16px; height: 16px; }
.stack { display: grid; grid-template-rows: 32px 32px; }
.three { grid-template-rows: 32px 16px 16px; }
.tool { display: flex; align-items: center; gap: 3px; text-align: left; white-space: nowrap; line-height: 11px; }
.tool svg { width: 26px; height: 26px; flex: none; }
.tool.mini svg { width: 14px; height: 14px; }
.mini { gap: 2px; }
.caret { border: 3px solid transparent; border-top-color: #222; border-bottom: 0; }
.tool .caret { margin-left: auto; }
.ga { width: 129px; padding: 0 4px 0 3px; }
.link { width: 130px; padding-left: 1px; grid-template-rows: 20px 26px 18px; }
.link .mini:last-child { align-self: end; }
.flip { width: 134px; }
.curved { width: 127px; padding: 0 2px; }
.area { width: 133px; padding-left: 2px; }
.other { width: 125px; }
.tool.mini { gap: 1px; }
.other .caret { margin-left: 3px; }
.user { width: 50px; padding-left: 2px; overflow: hidden; }
.window { margin-left: auto; width: 73px; border-left: 1px solid #b5b2bf; padding: 3px 5px 0 13px; }
.controls { display: flex; justify-content: space-between; }
.controls svg { width: 8px; height: 8px; }
.wtile { display: flex; flex-direction: column; align-items: center; width: 100%; margin-top: 5px; line-height: 10px; }
.wtile svg { width: 26px; height: 22px; margin-bottom: 9px; }

.canvas { position: relative; background: #000; border-left: 1px solid #8d8b96; border-top: 1px solid #77757f; overflow: hidden; }
.sheet { width: 100%; height: 100%; }
.float { position: absolute; left: 23px; bottom: 1px; width: 116px; height: 21px; display: grid; grid-template-columns: 43px 36px 1fr; background: #fafafa; border-radius: 5px; overflow: hidden; }
.float button { display: grid; place-items: center; }
.float svg { height: 14px; }
.mid { background: #efefef; }

.panel { border-left: 4px solid #bbb9c6; border-bottom: 1px solid #b5b2bf; display: flex; flex-direction: column; padding: 0 5px 3px 5px; min-height: 0; }
.title { display: flex; align-items: center; gap: 4px; height: 25px; margin-bottom: 1px; }
.title h2 { margin-right: auto; white-space: nowrap; }
.title svg { width: 11px; height: 11px; }
.title button { margin-left: 3px; }
.bar { display: flex; gap: 4px; height: 24px; align-items: center; }
.gbtn { width: 19px; height: 19px; flex: none; display: grid; place-items: center; background: #b9b7c5; border-radius: 2px; }
.gbtn svg { width: 12px; height: 12px; }
.gbtn.off { background: #b5b3bd; }
.wide { width: 24px; }
.grow { flex: 1; height: 18px; }
.find { flex: 1; display: flex; align-items: center; height: 18px; background: #fff; border: 1px solid #e6e2ee; padding-right: 7px; }
.find input { flex: 1; }
.find svg { width: 9px; height: 9px; }
.combo { display: grid; min-width: 0; background: #fff; border: 1px solid #e6e2ee; align-items: center; }
.combo > * { grid-area: 1 / 1; }
.combo select { appearance: none; width: 100%; height: 100%; padding-left: 6px; line-height: 12px; outline: 0; opacity: 1; }
.combo::after { content: ""; grid-area: 1 / 1; justify-self: end; margin-right: 3px; border: 4px solid transparent; border-top: 4px solid #222; border-bottom: 0; pointer-events: none; }
.dim { background: #fbf8fd; border-color: #ede9f2; }
.dim::after { border-top-color: #bbb8c3; }
.sw::before { content: ""; grid-area: 1 / 1; width: 24px; height: 8px; margin-left: 2px; background: #12f3f6; border: 1px solid #24686c; pointer-events: none; }
.sw select { padding-left: 31px; }
.flag svg { width: 10px; height: 10px; margin-left: 5px; pointer-events: none; }

.scroller { flex: 1; min-height: 0; display: grid; grid-template-columns: minmax(0, 1fr) 5px; gap: 8px; padding-right: 6px; }
.props { overflow: hidden; min-height: 0; }
h3 { display: flex; align-items: center; gap: 4px; height: 24px; padding-left: 3px; }
h3::before { content: ""; border: 4px solid transparent; border-top: 6px solid #222; border-bottom: 0; }
h3.big { height: 26px; }
h3.sub { padding-left: 11px; }
.row { display: grid; grid-template-columns: 129px minmax(0, 1fr); height: 16px; }
.row.tall { height: 18px; }
.row.sub > label { padding-left: 7px; }
.row > label { line-height: 13px; }
.row input { min-width: 0; width: 100%; background: #fff; border: 1px solid #e6e2ee; padding-left: 6px; outline: 0; }
.row input:disabled { background: #f9f5fc; border-color: #ede9f2; }
.pair { display: grid; grid-template-columns: minmax(0, 1fr) auto; gap: 3px; }
.pair .gbtn { height: auto; }
.row .dots { width: 14px; }
.preview { background: #000; height: 125px; margin: 2px 0 0; padding: 3px; display: flex; flex-direction: column; justify-content: space-between; }
.ends, .ends > div { display: flex; justify-content: space-between; gap: 2px; }
.preview button { background: #ece9f1; color: #222; height: 17px; padding: 0 2px; }
.preview .on { background: #0462a6; color: #fff; }
.preview .sq { width: 16px; display: grid; place-items: center; padding: 0; }
.sq svg { width: 11px; height: 11px; }
.marks { display: flex; flex-direction: column; align-items: flex-end; gap: 1px; width: 137px; font: 7px/9px "Liberation Sans", Arial, sans-serif; color: #3ce0d0; }
.marks span { border: 1px dotted #17706c; white-space: nowrap; }
.sym { height: 38px; }
.two { display: grid; grid-template-columns: 62px 61px; justify-content: space-between; }
.two label { display: block; height: 13px; line-height: 10px; }
.two .combo { height: 23px; }
.row.dist { margin-top: 2px; }
.dist input { width: 62px; justify-self: end; }
.track { background: #d8d4de; margin: 3px 0 2px; min-height: 0; }
.thumb { background: #4b4954; height: 90%; }
.showall { align-self: flex-end; color: #0462a6; font-weight: 700; line-height: 20px; }
.actions { display: flex; gap: 2px; }
.modify { width: 43px; background: #b1afb9; border-radius: 2px; font-size: 10px; }
.actions .modify:disabled { color: #d3d1d9; }

.side { border-left: 1px solid #b5b2bf; }
.side button { display: grid; place-items: center; width: 100%; }
.side svg { width: 14px; height: 14px; }
.chev { height: 27px; }
.strip { display: grid; height: 163px; grid-template-rows: repeat(7, 1fr); border-bottom: 1px solid #b5b2bf; }
.strip button { border-top: 1px solid #b5b2bf; }
.strip .on { background: #0462a6; }

.snaps { grid-column: 1 / -1; display: flex; gap: 3px; padding: 3px 0 3px 1px; }
.snapset { display: flex; align-items: center; justify-content: space-between; border: 1px solid #cfccd8; padding: 0 3px; }
.first { width: 289px; padding-left: 4px; }
.second { width: 256px; }
.snapset button { width: 16px; height: 16px; display: grid; place-items: center; }
.snapset svg { width: 12px; height: 12px; }
.snapset .g { background: #bbb9c7; }
.snapset i { width: 1px; height: 16px; background: #bbb9c7; }

.status { grid-column: 1 / -1; background: #0462a6; color: #e6f0f8; display: flex; gap: 18px; padding: 0 75px 0 2px; font-size: 12px; line-height: 20px; white-space: nowrap; }
.msg { margin-right: auto; }
.pan { margin-left: 20px; }
.sel { margin-left: 17px; }
```
